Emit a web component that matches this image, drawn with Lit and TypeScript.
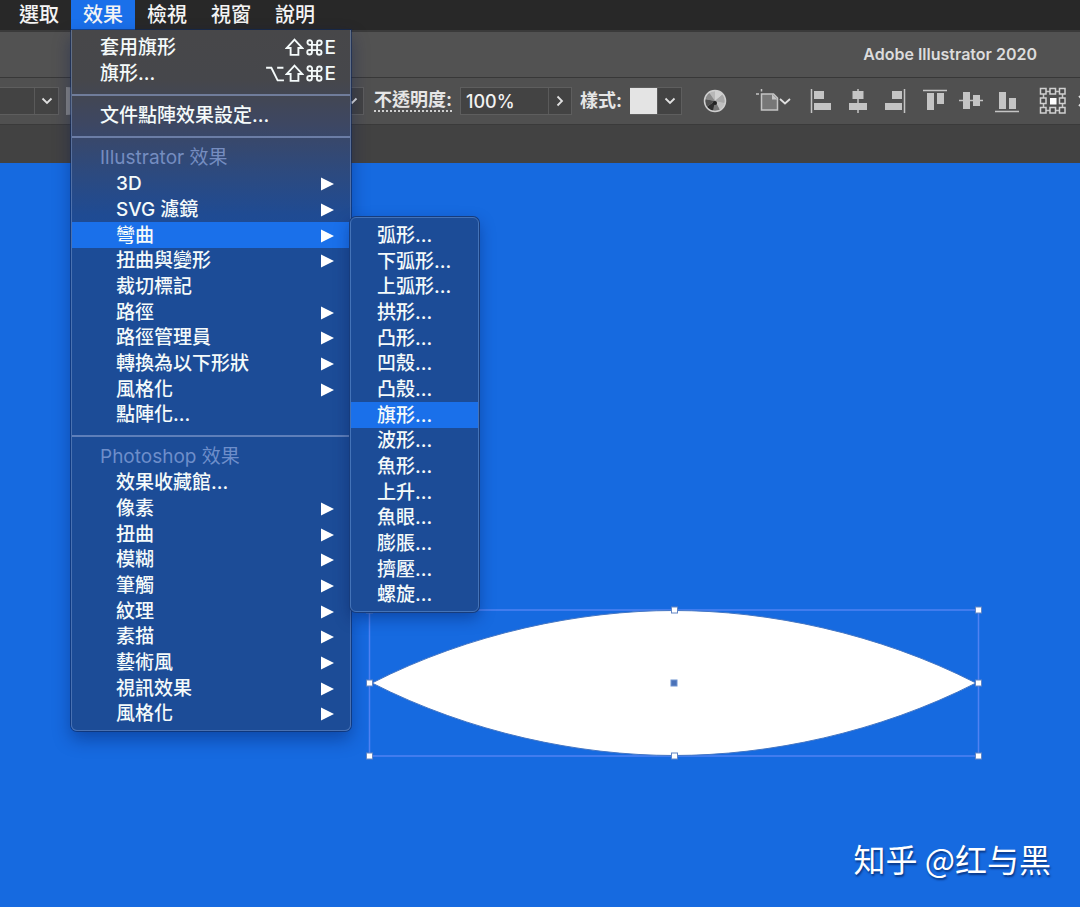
import { LitElement, html, svg, css, nothing } from "lit";
import { customElement, property } from "lit/decorators.js";
import { classMap } from "lit/directives/class-map.js";

interface Entry {
  label: string;
  kind?: "header" | "sub" | "plain";
  keys?: string;
  nested?: boolean;
  active?: boolean;
  children?: Entry[];
}

const sub = (label: string): Entry => ({ label, nested: true, kind: "sub" });
const leaf = (label: string): Entry => ({ label, nested: true });

const WARPS: Entry[] = [
  "弧形", "下弧形", "上弧形", "拱形", "凸形", "凹殼", "凸殼", "旗形",
  "波形", "魚形", "上升", "魚眼", "膨脹", "擠壓", "螺旋",
].map((name) => ({ label: `${name}...`, active: name === "旗形" }));

const EFFECTS: Entry[][] = [
  [
    { label: "套用旗形", keys: "⇧⌘E" },
    { label: "旗形...", keys: "⌥⇧⌘E" },
  ],
  [{ label: "文件點陣效果設定..." }],
  [
    { label: "Illustrator 效果", kind: "header" },
    sub("3D"),
    sub("SVG 濾鏡"),
    { label: "彎曲", nested: true, kind: "sub", active: true, children: WARPS },
    sub("扭曲與變形"),
    leaf("裁切標記"),
    sub("路徑"),
    sub("路徑管理員"),
    sub("轉換為以下形狀"),
    sub("風格化"),
    leaf("點陣化..."),
  ],
  [
    { label: "Photoshop 效果", kind: "header" },
    leaf("效果收藏館..."),
    sub("像素"),
    sub("扭曲"),
    sub("模糊"),
    sub("筆觸"),
    sub("紋理"),
    sub("素描"),
    sub("藝術風"),
    sub("視訊效果"),
    sub("風格化"),
  ],
];

const KEY_NAMES: Record<string, string> = { "⌥": "Option", "⇧": "Shift", "⌘": "Command" };

const keyGlyph = (key: string) => {
  const shapes: Record<string, unknown> = {
    "⌥": svg`<path d="M1 4.5h5l6 12h6M11.500 4.500h6"/>`,
    "⇧": svg`<path d="M9 2.500l7.500 8h-3.800v6.500h-7.400v-6.500h-3.800z"/>`,
    "⌘": svg`<path d="M6.500 7.500h5v5h-5zM6.500 7.500h-2a2.200 2.200 0 1 1 2.200-2.200zM11.500 7.500v-2a2.200 2.200 0 1 1 2.200 2.200zM11.500 12.500h2a2.200 2.200 0 1 1-2.200 2.200zM6.500 12.500v2a2.200 2.200 0 1 1-2.200-2.200z"/>`,
  };
  return shapes[key]
    ? html`<svg class="key" viewBox="0 0 18 20" role="img" aria-label=${KEY_NAMES[key]}>${shapes[key]}</svg>`
    : html`<span>${key}</span>`;
};

@customElement("menu-list")
class MenuList extends LitElement {
  @property({ attribute: false }) groups: Entry[][] = [];

  static styles = css`
    :host { display: block; }
    .group { list-style: none; margin: 0; padding: 0; }
    .group + .group { border-top: 2px solid rgba(150, 170, 215, 0.55); margin-top: 8px; padding-top: 6px; }
    .entry { position: relative; height: 26px; }
    .effects > .entry:nth-child(3n + 5), .flyout > .entry:nth-child(3n) { height: 25px; }
    .item {
      display: flex; align-items: center; justify-content: space-between; box-sizing: border-box;
      width: 100%; height: 100%; padding: 1px 14px 0 28px; border: 0; background: none;
      color: #f4fafa; font: inherit; line-height: 24px; text-align: left; white-space: nowrap;
    }
    .nested { padding: 1px 16px 0 44px; }
    .flyout .item { padding: 1px 12px 0 26px; }
    .active { background: #1a70ea; }
    .header { color: rgba(148, 172, 226, 0.7); font-weight: 400; }
    .arrow { width: 13px; height: 14px; fill: #fff; }
    .keys { display: flex; align-items: center; gap: 1px; }
    .key { width: 19px; height: 21px; fill: none; stroke: #f4fafa; stroke-width: 1.8; }
    .panel {
      position: absolute; left: 100%; top: -5px; z-index: 2; box-sizing: border-box;
      width: 129px; padding: 4px 0; border: 1px solid #4473b8; border-radius: 6px;
      background: #1c4c97; box-shadow: 0 0 0 1px #173c7c, 0 6px 16px rgba(0, 20, 80, 0.4);
    }
  `;

  private renderEntry(e: Entry): unknown {
    if (e.kind === "header") {
      return html`<li class="entry"><div class="item header">${e.label}</div></li>`;
    }
    return html`<li class="entry" role="none">
      <button role="menuitem" class=${classMap({ item: true, nested: !!e.nested, active: !!e.active })}>
        <span>${e.label}</span>
        ${e.keys ? html`<span class="keys">${[...e.keys].map(keyGlyph)}</span>` : nothing}
        ${e.kind === "sub"
          ? html`<svg class="arrow" viewBox="0 0 13 14" aria-hidden="true"><path d="M0 0.500L13 7L0 13.500z" /></svg>`
          : nothing}
      </button>
      ${e.children
        ? html`<div class="panel"><ul class="group flyout" role="menu">${e.children.map((c) => this.renderEntry(c))}</ul></div>`
        : nothing}
    </li>`;
  }

  render() {
    return this.groups.map(
      (g) => html`<ul class="group effects" role="menu">${g.map((e) => this.renderEntry(e))}</ul>`,
    );
  }
}

const chevronDown = html`<svg width="12" height="8" viewBox="0 0 12 8" class="line" aria-hidden="true"><path d="M1.500 1.500L6 6L10.500 1.500" /></svg>`;
const chevronRight = html`<svg width="8" height="12" viewBox="0 0 8 12" class="line" aria-hidden="true"><path d="M1.500 1.500L6 6L1.500 10.500" /></svg>`;

const ALIGN = [
  { name: "水平齊左", art: svg`<path d="M2.500 1v24" class="rule"/><path d="M5 3h10v8H5zM5 15h17v7H5z"/>` },
  { name: "水平居中", art: svg`<path d="M13 1v24" class="rule"/><path d="M7.500 3h11v8h-11zM4 15h18v7H4z"/>` },
  { name: "水平齊右", art: svg`<path d="M23.500 1v24" class="rule"/><path d="M11 3h10v8H11zM4 15h17v7H4z"/>` },
  { name: "垂直齊上", art: svg`<path d="M1 2.500h24" class="rule"/><path d="M5 5h7v17H5zM15 5h7v11h-7z"/>` },
  { name: "垂直居中", art: svg`<path d="M1 12.500h24" class="rule"/><path d="M5 4h7v17H5zM15 7h7v11h-7z"/>` },
  { name: "垂直齊下", art: svg`<path d="M1 23.500h24" class="rule"/><path d="M5 4h7v17H5zM15 10h7v11h-7z"/>` },
];

@customElement("app-root")
class AppRoot extends LitElement {
  static styles = css`
    :host {
      display: flex; flex-direction: column; min-height: 100vh; overflow: hidden;
      font-family: Inter, "Noto Sans CJK TC", sans-serif; font-size: 19px; font-weight: 500; color: #eee;
    }
    button, input { font: inherit; color: inherit; margin: 0; padding: 0; border: 0; background: none; box-sizing: border-box; }
    .menubar { display: flex; height: 30px; padding-left: 7px; background: #282828; }
    .slot { position: relative; width: 64px; }
    .top { width: 100%; height: 30px; font-size: 20px; line-height: 30px; text-align: center; color: #f4f4f4; }
    .open { background: #1a70ea; }
    .menu {
      position: absolute; left: 0; top: 100%; z-index: 3; box-sizing: border-box; width: 280px;
      padding: 4px 0; border: 1px solid rgba(130, 160, 210, 0.45); border-top: 0; border-radius: 0 0 6px 6px; font-size: 19px;
      background: linear-gradient(#474749 0, #46474b 50px, #3d4763 95px, #2c4a80 145px, #1f4b93 185px, #1c4c97 220px) border-box;
      box-shadow: 0 0 0 1px rgba(15, 40, 90, 0.6), 0 8px 18px rgba(0, 20, 80, 0.4);
    }
    .titlebar {
      display: flex; align-items: center; justify-content: flex-end; height: 48px; box-sizing: border-box;
      padding-right: 43px; background: #525252; border-top: 2px solid #3a3a3a; border-bottom: 1px solid #383838;
    }
    .title { margin: 0; font-size: 16px; line-height: 20px; padding-bottom: 2px; font-weight: 600; color: #dcdcdc; }
    .controls { display: flex; align-items: center; height: 46px; background: #505050; white-space: nowrap; }
    .controls > * { flex: none; }
    .field { display: flex; box-sizing: border-box; height: 28px; border: 1px solid #5e5e5e; background: #434343; }
    .field .step { display: grid; place-items: center; width: 24px; height: 26px; border-left: 1px solid #5a5a5a; }
    .profile { width: 59px; justify-content: flex-end; border-left: 0; }
    .stroke { width: 298px; margin: 0 10px 0 7px; justify-content: flex-end; border-left: 12px solid #858585; }
    .label { font-weight: 700; color: #e6e6e6; font-size: 18px; line-height: 20px; }
    .dotted { border-bottom: 2px dotted #cfcfcf; }
    .opacity { width: 112px; margin: 0 8px; }
    .value { width: 87px; padding-left: 5px; font-size: 18px; color: #f2f2f2; }
    .style { margin-left: 8px; width: 52px; border-left: 0; }
    .swatch { width: 27px; height: 26px; background: #e4e4e4; }
    .tool { display: grid; place-items: center; width: 36px; height: 30px; }
    .color { margin-left: 15px; }
    .board { margin: 0 13px 0 22px; }
    .spaced { margin-left: 5px; }
    .reference { margin-left: 10px; }
    .controls > .edge { flex: 1 1 0; min-width: 0; overflow: hidden; margin-left: 6px; justify-items: start; }
    .tool svg { fill: #c4c4c4; display: block; }
    .rule { stroke: #c4c4c4; stroke-width: 1.5; fill: none; }
    .line, .tool svg .line { fill: none; stroke: #e0e0e0; stroke-width: 1.8; }
    .tabs { height: 39px; background: #424242; border-top: 1px solid #3a3a3a; box-sizing: border-box; }
    .canvas { position: relative; flex: 1; background: #166ae0; }
    .art { position: absolute; left: 364px; top: 442px; }
    .box { fill: none; stroke: #5082f2; stroke-width: 1.5; }
    .leaf { fill: #fff; stroke: #4476c4; stroke-width: 1; }
    .pin { fill: #fff; stroke: #6285c4; stroke-width: 1; }
    .mid { fill: #4a72b8; stroke: #6f93d0; }
    .credit {
      position: absolute; right: 29px; bottom: 25px; margin: 0; font-family: "Noto Sans CJK SC", sans-serif;
      font-size: 32px; line-height: 48px; font-weight: 400; color: #fff; text-shadow: 1px 2px 2px rgba(0, 20, 70, 0.6);
    }
  `;

  render() {
    const pins = [[5, 5], [310, 5], [614, 5], [5, 78], [614, 78], [5, 151], [310, 151], [614, 151]];
    const cells = [[0, 0], [1, 0], [2, 0], [0, 1], [2, 1], [0, 2], [1, 2], [2, 2]];
    return html`
      <nav class="menubar">
        ${["選取", "效果", "檢視", "視窗", "說明"].map((name) => {
          const open = name === "效果";
          return html`<div class="slot">
            <button class=${classMap({ top: true, open })}>${name}</button>
            ${open ? html`<menu-list class="menu" .groups=${EFFECTS}></menu-list>` : nothing}
          </div>`;
        })}
      </nav>
      <header class="titlebar"><h1 class="title">Adobe Illustrator 2020</h1></header>
      <div class="controls">
        <div class="field profile"><button class="step" aria-label="描邊">${chevronDown}</button></div>
        <div class="field stroke"><button class="step" aria-label="筆刷">${chevronDown}</button></div>
        <label class="label dotted" for="opacity">不透明度:</label>
        <div class="field opacity">
          <input class="value" id="opacity" value="100%" />
          <button class="step" aria-label="不透明度選項">${chevronRight}</button>
        </div>
        <span class="label">樣式:</span>
        <div class="field style">
          <span class="swatch"></span>
          <button class="step" aria-label="樣式">${chevronDown}</button>
        </div>
        <button class="tool color" aria-label="重新上色">
          <svg width="24" height="24" viewBox="0 0 24 24">
            <circle cx="12" cy="12" r="10.500" fill="#9a9a9a" />
            <path d="M12 12L12 1.500A10.500 10.500 0 0 1 20 5.200z" fill="#d0d0d0" />
            <path d="M12 12L20 5.200A10.500 10.500 0 0 1 22.300 14z" fill="#a8a8a8" />
            <path d="M12 12L22.300 14A10.500 10.500 0 0 1 17 21.200z" fill="#c0c0c0" />
            <path d="M12 12L17 21.200A10.500 10.500 0 0 1 10 22.300z" fill="#777" />
            <path d="M12 12L10 22.300A10.500 10.500 0 0 1 3.500 18z" fill="#2e2e2e" />
            <path d="M12 12L3.500 18A10.500 10.500 0 0 1 1.700 10z" fill="#505050" />
            <path d="M12 12L1.700 10A10.500 10.500 0 0 1 6 3.300z" fill="#8a8a8a" />
            <path d="M12 12L6 3.300A10.500 10.500 0 0 1 12 1.500z" fill="#b8b8b8" />
            <circle cx="12" cy="12" r="10.500" fill="none" stroke="#cfcfcf" stroke-width="1.500" />
            <circle cx="12" cy="14" r="2" fill="#222" />
          </svg>
        </button>
        <button class="tool board" aria-label="工作區域">
          <svg width="36" height="26" viewBox="0 0 36 26">
            <path d="M6.500 6h12l4 4v12h-16z" fill="#777" stroke="#c4c4c4" stroke-width="1.500" />
            <path d="M17 6l5.500 5.500H17z" />
            <path d="M1 6h3M6.500 1v2.500" class="rule" />
            <path d="M25 11l5 4.500 5-4.500" class="line" />
          </svg>
        </button>
        ${ALIGN.map(
          (a, i) => html`<button class=${classMap({ tool: true, spaced: i === 3 })} aria-label=${a.name}>
            <svg width="26" height="26" viewBox="0 0 26 26">${a.art}</svg>
          </button>`,
        )}
        <button class="tool reference" aria-label="參考點">
          <svg width="28" height="28" viewBox="0 0 28 28">
            <path d="M4.500 4.500h19v19h-19z" class="rule" />
            ${cells.map(([c, r]) => svg`<rect x=${1.5 + c * 9.5} y=${1.5 + r * 9.5} width="5.500" height="5.500" fill="#484848" stroke="#d0d0d0" stroke-width="1.500" />`)}
            <path d="M11 11h6.500v6.500H11z" fill="#fff" />
          </svg>
        </button>
        <button class="tool edge" aria-label="變形">
          <svg width="20" height="26" viewBox="0 0 20 26"><path d="M2 8l9 10M11 8L2 18" class="line" /></svg>
        </button>
      </div>
      <div class="tabs"></div>
      <main class="canvas">
        <svg class="art" width="620" height="160" viewBox="0 0 620 160" role="img" aria-label="所選形狀">
          <path class="box" d="M5.500 5h609v146h-609z" />
          <path class="leaf" d="M8 78C106 28 216 5.500 310 5.500S514 28 612 78C514 128 404 150.500 310 150.500S106 128 8 78z" />
          ${pins.map(([x, y]) => svg`<rect class="pin" x=${x - 2.5} y=${y - 3} width="6" height="6" />`)}
          <rect class="mid" x="307" y="75" width="6" height="6" />
        </svg>
        <p class="credit">知乎 @红与黑</p>
      </main>
    `;
  }
}
